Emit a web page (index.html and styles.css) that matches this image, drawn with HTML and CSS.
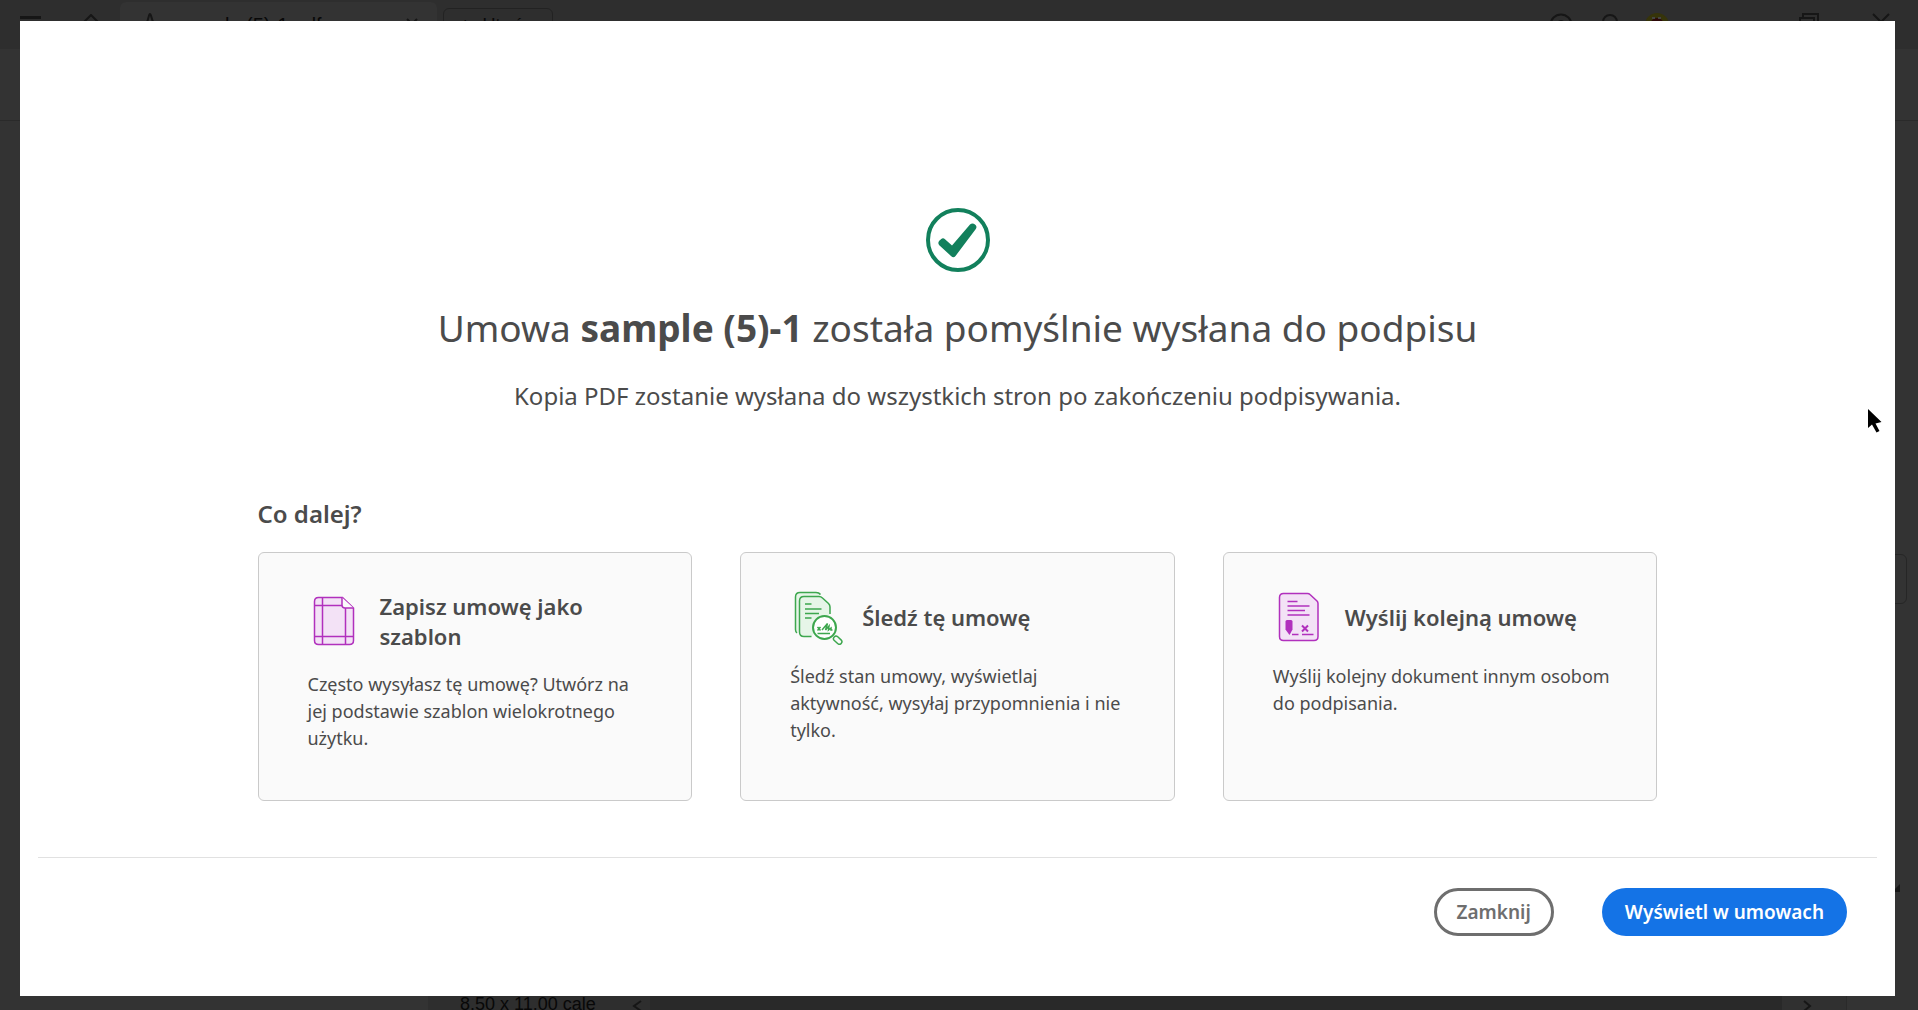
FILE: index.html
```html
<!DOCTYPE html>
<html lang="pl">
<head>
<meta charset="utf-8">
<title>Umowa wysłana do podpisu</title>
<link rel="stylesheet" href="styles.css">
</head>
<body>
<div class="app" aria-hidden="true">
  <header class="titlebar">
    <svg class="icon menu" viewBox="0 0 22 20"><path d="M0 2.500h21M0 10h21M0 17h21"/></svg>
    <svg class="icon home" viewBox="0 0 22 22"><path d="M3 9L11 1L19 9V20H3Z"/></svg>
    <div class="tab">
      <svg class="icon doc" viewBox="0 0 20 20"><path d="M10 1C8 1 10 9 1 18M10 1C12 1 10 10 19 15M4 14L17 13"/></svg>
      <span class="tab-name">sample (5)-1.pdf</span>
      <svg class="icon tab-close" viewBox="0 0 14 14"><path d="M2 2L12 12M12 2L2 12"/></svg>
    </div>
    <div class="create"><span>+</span><span>Utwórz</span></div>
    <div class="system">
      <svg class="icon help" viewBox="0 0 24 24"><circle cx="12" cy="12" r="10.500"/><path d="M9 10a3 3 0 1 1 3 4v2"/></svg>
      <svg class="icon bell" viewBox="0 0 22 24"><path d="M4 18V9a7 7 0 0 1 14 0v9l2 2H2Z"/></svg>
      <svg class="avatar" viewBox="0 0 24 24"><circle cx="12" cy="12" r="12" fill="#36340a"/><circle cx="12" cy="12" r="7" fill="#2c0808"/><path d="M7 5h3M13 5h3" stroke="#444" stroke-width="2"/></svg>
      <svg class="icon restore" viewBox="0 0 20 20"><path d="M1 5H15V19H1ZM4 4V1H19V14H16"/></svg>
      <svg class="icon close" viewBox="0 0 18 18"><path d="M1 1L17 17M17 1L1 17"/></svg>
    </div>
  </header>
  <div class="toolbar"></div>
  <main class="workspace">
    <div class="panel-handle"></div>
    <div class="scroll-arrow"></div>
  </main>
  <footer class="status">
    <div class="page-size"><span>8.50 x 11.00 cale</span><svg class="icon arrow" viewBox="0 0 10 12"><path d="M9 1L2 6L9 11"/></svg></div>
    <div class="track"></div>
    <div class="track-end"><svg class="icon arrow" viewBox="0 0 10 12"><path d="M2 1L8 6L2 11"/></svg></div>
    <div class="corner"></div>
  </footer>
</div>

<section class="dialog" role="dialog" aria-labelledby="dialog-title">
  <div class="content">
    <svg class="success" viewBox="0 0 64 64"><circle cx="32" cy="32" r="30" fill="none" stroke="#12805c" stroke-width="4"/><path d="M44 16.500Q46.500 14.500 49 16.500Q51.500 18.500 49.800 21L29.500 48Q27.500 50.500 25 48L13 37Q11.500 35 13 33L15 31.200Q17 29.500 19 31.200L26 37.500Z" fill="#12805c"/></svg>
    <h1 class="title" id="dialog-title">Umowa <strong>sample (5)-1</strong> została pomyślnie wysłana do podpisu</h1>
    <p class="subtitle">Kopia PDF zostanie wysłana do wszystkich stron po zakończeniu podpisywania.</p>
    <div class="next">
      <h2 class="next-title">Co dalej?</h2>
      <div class="cards">
        <button class="card" type="button">
          <span class="card-head">
            <svg class="card-icon purple" viewBox="0 0 54 54"><path class="sheet" d="M10.500 2.500H34.500L45.500 13V45.500Q45.500 49.500 41.500 49.500H10.500Q6.500 49.500 6.500 45.500V6.500Q6.500 2.500 10.500 2.500Z"/><path d="M14.500 2.500V49.500M37.500 13V49.500M6.500 10.500H34M6.500 41.500H45.500"/><path class="fold" d="M34 2.500V10Q34 13 37 13H45.500"/></svg>
            <span class="card-title">Zapisz umowę jako szablon</span>
          </span>
          <span class="card-text">Często wysyłasz tę umowę? Utwórz na jej podstawie szablon wielokrotnego użytku.</span>
        </button>
        <button class="card" type="button">
          <span class="card-head">
            <svg class="card-icon green" viewBox="0 0 54 54"><path class="sheet" d="M7 42Q5.500 41 5.500 38.500V6Q5.500 1.500 10 1.500H26Q29 1.500 30.500 3.500"/><path class="sheet" d="M21.500 45.500H14Q9.500 45.500 9.500 41V10Q9.500 5.500 14 5.500H29Q31 5.500 32.500 7L38.500 12.500Q40 14 40 16V23"/><path d="M15 13H21.500M15 18H31.500M15 22.500H29M15 27H21.500"/><circle class="lens" cx="34.500" cy="36.500" r="11.500"/><path d="M27.500 36L30.500 39.500M30.500 36L27.500 39.500M32 39L37.500 32.500L35.500 39L39 35L38.500 39L41 37V39H42.500M27.500 42.500H40"/><rect x="43" y="46.500" width="9.500" height="5" rx="2.500" transform="rotate(43 47.500 49)"/></svg>
            <span class="card-title">Śledź tę umowę</span>
          </span>
          <span class="card-text">Śledź stan umowy, wyświetlaj aktywność, wysyłaj przypomnienia i nie tylko.</span>
        </button>
        <button class="card" type="button">
          <span class="card-head">
            <svg class="card-icon purple" viewBox="0 0 54 54"><path class="sheet" d="M10.500 2.500H34.500Q36 2.500 37 3.500L44 10Q45 11 45 12.500V45.500Q45 49.500 41 49.500H10.500Q6.500 49.500 6.500 45.500V6.500Q6.500 2.500 10.500 2.500Z"/><path d="M14.500 10.500H24.500M14.500 15H36.500M14.500 19.500H32M14.500 24H36.500M19 43.500H25.500M29 43.500H40.500"/><path class="mark" d="M29 34.500L35 40.500M35 34.500L29 40.500"/><path class="pen" d="M12.500 30.500Q12.500 29 14 29H18Q19.500 29 19.500 30.500V38.500L16.500 44L12.500 38.500Z"/></svg>
            <span class="card-title">Wyślij kolejną umowę</span>
          </span>
          <span class="card-text">Wyślij kolejny dokument innym osobom do podpisania.</span>
        </button>
      </div>
    </div>
  </div>
  <div class="actions">
    <button class="btn btn-outline" type="button">Zamknij</button>
    <button class="btn btn-primary" type="button">Wyświetl w umowach</button>
  </div>
</section>

<svg class="pointer" viewBox="0 0 16 26"><path d="M1 1V20L5 16.500L9.500 24.500L12.500 23L8.500 15.500L14.500 14Z"/></svg>
</body>
</html>
```
FILE: styles.css
```css
* { box-sizing: border-box; }

body {
  margin: 0;
  min-height: 100vh;
  overflow: hidden;
  color: #4b4b4b;
  background: #333;
  font-family: "Noto Sans", "Open Sans", sans-serif;
}

/* Dimmed application window */
.app {
  display: flex;
  flex-direction: column;
  height: 100vh;
  font-family: "Liberation Sans", Arial, sans-serif;
  color: #080808;
}

.titlebar {
  display: flex;
  height: 49px;
  padding-left: 20px;
  background: #2e2e2e;
}

.icon {
  flex: none;
  fill: none;
  stroke: #161616;
  stroke-width: 2;
}

.menu { width: 22px; height: 20px; margin-top: 15px; stroke-width: 3; }
.home { width: 22px; height: 22px; margin: 14px 29px 0 38px; }

.tab {
  display: flex;
  flex: none;
  width: 317px;
  margin: 2px 6px 0 -11px;
  padding: 11px 18px 0 20px;
  border-radius: 6px 6px 0 0;
  background: #333;
}

.doc { width: 20px; height: 20px; margin-right: 16px; }
.tab-name { flex: 1; font-size: 20px; line-height: 24px; }
.tab-close { width: 14px; height: 14px; margin-top: 4px; }

.create {
  display: flex;
  flex: none;
  gap: 12px;
  width: 110px;
  height: 36px;
  margin-top: 8px;
  padding: 4px 16px;
  border: 1px solid #222;
  border-radius: 6px;
  font-size: 18px;
  line-height: 24px;
}

.system { display: flex; margin-left: auto; padding: 13px 28px 0 0; }
.help { width: 24px; height: 24px; margin-right: 26px; }
.bell { width: 22px; height: 24px; margin-right: 24px; }
.avatar { width: 24px; height: 24px; margin-right: 130px; }
.restore { width: 20px; height: 20px; margin-right: 53px; }
.close { width: 18px; height: 18px; }

.toolbar { height: 72px; border-bottom: 1px solid #2a2a2a; }

.workspace {
  display: flex;
  flex: 1;
  flex-direction: column;
  align-items: flex-end;
}

.panel-handle {
  width: 40px;
  height: 50px;
  margin: 433px 11px 0 0;
  border: 1px solid #262626;
  border-radius: 6px;
}

.scroll-arrow {
  margin: 280px 18px 0 0;
  border-bottom: 8px solid #181818;
  border-left: 8px solid transparent;
}

.status { display: flex; height: 16px; }

.page-size {
  display: flex;
  align-items: flex-start;
  justify-content: space-between;
  width: 222px;
  margin-left: 428px;
  padding: 0 8px 0 32px;
  background: #2e2e2e;
  font-size: 18px;
  line-height: 20px;
}

.arrow { width: 10px; height: 12px; margin-top: 6px; }
.track { flex: 1; background: #292929; }
.track-end { width: 64px; padding-left: 20px; background: #303030; }
.corner { width: 72px; border-left: 1px solid #2a2a2a; }

/* Confirmation dialog */
.dialog {
  position: fixed;
  inset: 21px 23px 14px 20px;
  display: flex;
  flex-direction: column;
  background: #fff;
}

.content {
  display: flex;
  flex: 1;
  flex-direction: column;
  align-items: center;
  justify-content: flex-end;
  padding: 0 24px 56px;
}

.success { width: 64px; height: 64px; }

.title {
  margin: 28px 0 0;
  font-size: 37px;
  font-weight: 400;
  line-height: 56px;
}

.title strong { font-weight: 700; }

.subtitle {
  margin: 24px 0 0;
  font-size: 24px;
  line-height: 32px;
}

.next { width: 100%; max-width: 1400px; }

.next-title {
  margin: 86px 0 22px;
  font-size: 24px;
  font-weight: 600;
  line-height: 32px;
}

.cards {
  display: grid;
  grid-template-columns: repeat(3, 1fr);
  gap: 48px;
}

.card {
  display: flex;
  flex-direction: column;
  gap: 18px;
  min-height: 249px;
  padding: 38px 44px 38px 49px;
  border: 1px solid #cacaca;
  border-radius: 6px;
  background: #fafafa;
  color: inherit;
  font-family: inherit;
  text-align: left;
}

.card-head { display: flex; gap: 18px; align-items: center; }
.card-icon { flex: none; width: 54px; height: 54px; fill: none; stroke-width: 1.500; }
.purple { stroke: #b130bd; }
.green { stroke: #3da74e; }
.purple .sheet { fill: #f3e2f6; }
.green .sheet { fill: #e6f5e8; }
.fold { fill: #fafafa; }
.lens { fill: #fff; stroke-width: 2; }
.mark { stroke-width: 2; }
.pen { fill: #b130bd; stroke: none; }

.card-title {
  padding-bottom: 2px;
  font-size: 22px;
  font-weight: 600;
  line-height: 30px;
}

.card-text { font-size: 18px; line-height: 27px; }

.actions {
  display: flex;
  justify-content: flex-end;
  gap: 48px;
  margin: 0 18px;
  padding: 30px 30px 60px;
  border-top: 1px solid #e1e1e1;
}

.btn {
  height: 48px;
  border: 0;
  border-radius: 24px;
  padding: 0 23px;
  font-family: inherit;
  font-size: 19px;
  font-weight: 600;
}

.btn-outline {
  padding: 0 20px;
  border: 3px solid #6e6e6e;
  background: #fff;
  color: #6e6e6e;
}

.btn-primary { background: #1473e6; color: #fff; }

/* Mouse pointer */
.pointer {
  position: absolute;
  top: 408px;
  left: 1867px;
  width: 16px;
  height: 26px;
}
```
